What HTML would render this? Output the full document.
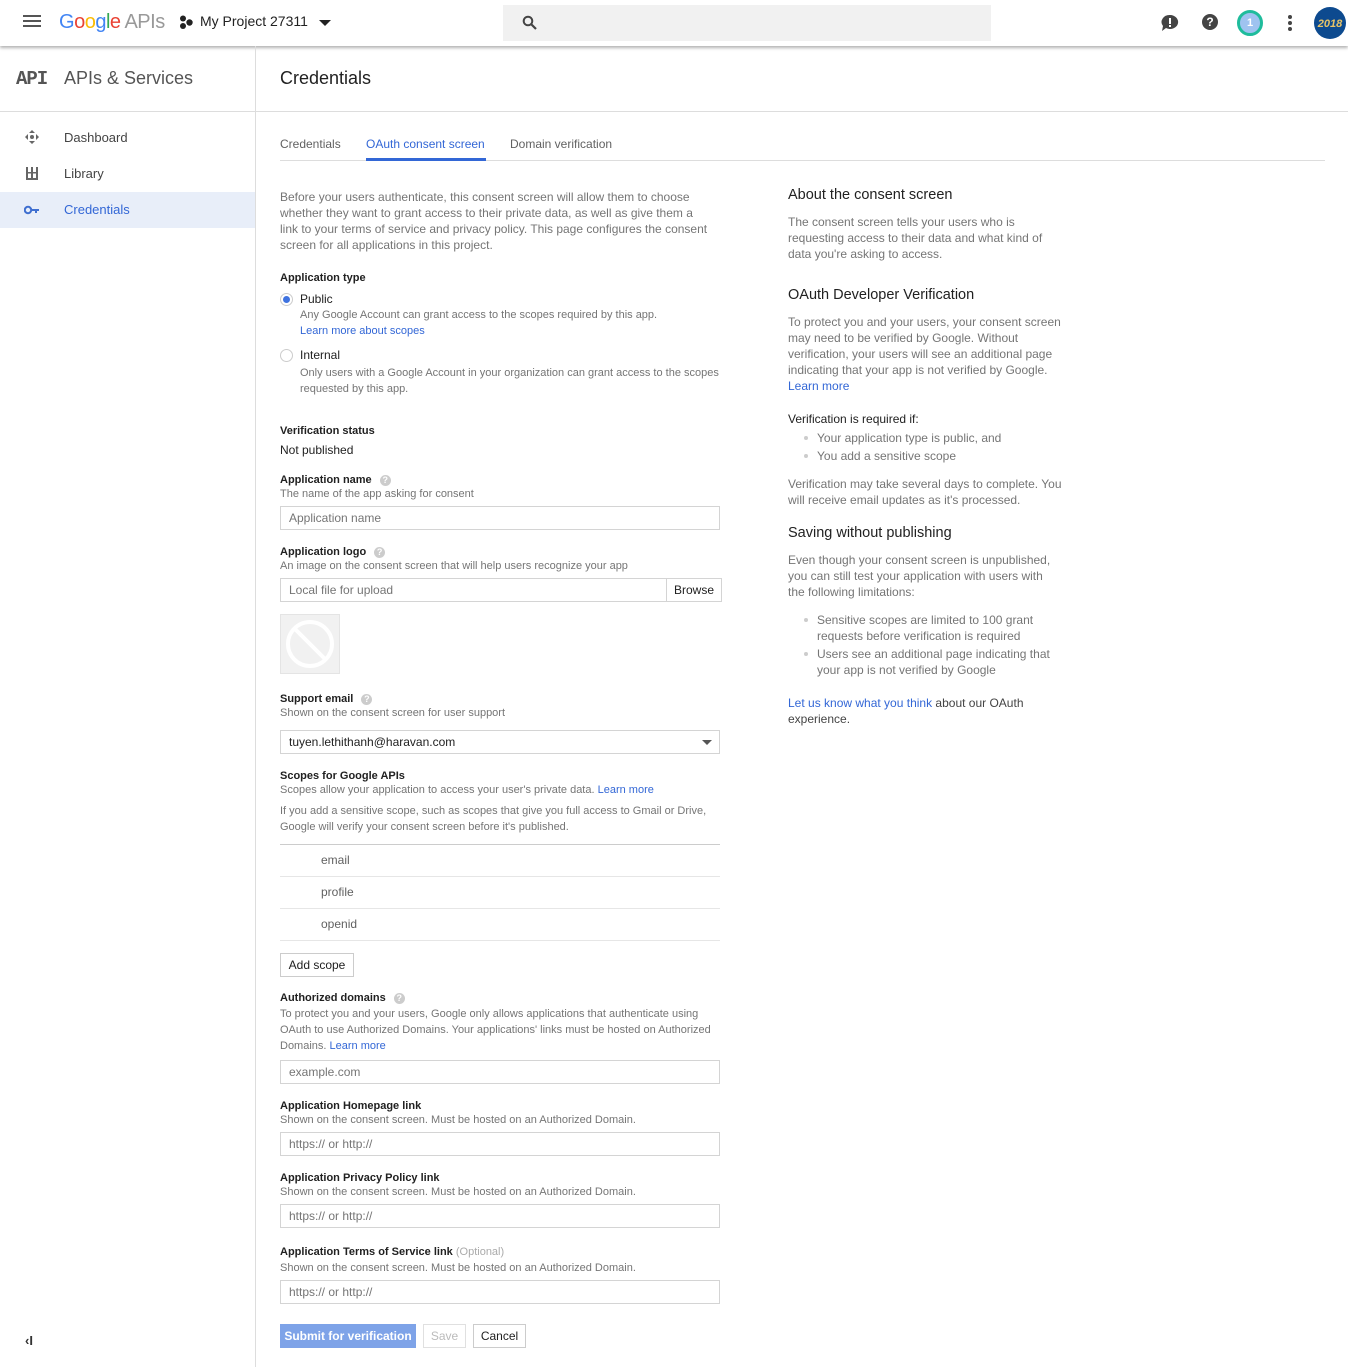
<!DOCTYPE html>
<html><head><meta charset="utf-8"><style>
*{box-sizing:border-box;margin:0;padding:0}
body{width:1348px;height:1367px;position:relative;overflow:hidden;background:#fff;font-family:"Liberation Sans",Arial,sans-serif;color:#212121;font-size:12px}
.a{position:absolute;white-space:nowrap}
.g{color:#757575}
.b{color:#3367d6}
.lbl{font-size:11px;font-weight:bold;color:#212121}
.sub{font-size:11px;color:#757575}
.inp{position:absolute;left:280px;width:440px;height:24px;border:1px solid #d4d4d4;font-size:12px;color:#757575;padding:4px 8px;line-height:14px}
.q{display:inline-block;width:11px;height:11px;border-radius:50%;background:#ccc;color:#fff;font-size:9px;text-align:center;line-height:11px;font-weight:bold;vertical-align:middle;margin-left:8px}
.p{font-size:12px;line-height:16px;color:#757575}
.h{font-size:14.5px;color:#212121}
.li{position:absolute;left:817px;font-size:12px;line-height:16px;color:#757575;white-space:nowrap}
.li:before{content:"";position:absolute;left:-13px;top:6px;width:4px;height:4px;border-radius:50%;background:#ccc}
</style></head><body>
<div class="a" style="left:0;top:0;width:1348px;height:46px;background:#fff;box-shadow:0 2px 3px rgba(0,0,0,.3)"></div>
<div class="a" style="left:23px;top:15px;width:18px;height:2px;background:#555;box-shadow:0 5px 0 #555,0 10px 0 #555"></div>
<div class="a" style="left:59px;top:11px;font-size:20px;letter-spacing:-0.5px"><span style="color:#4285f4">G</span><span style="color:#ea4335">o</span><span style="color:#fbbc05">o</span><span style="color:#4285f4">g</span><span style="color:#34a853">l</span><span style="color:#ea4335">e</span> <span style="color:#999">APIs</span></div>
<svg class="a" style="left:179px;top:15px" width="14" height="14"><circle cx="4" cy="3.5" r="3" fill="#222"/><circle cx="4" cy="11" r="3" fill="#222"/><circle cx="10.5" cy="7.5" r="3.2" fill="#222"/></svg>
<div class="a" style="left:200px;top:13px;font-size:14px;color:#222">My Project 27311</div>
<div class="a" style="left:319px;top:20px;border-left:6px solid transparent;border-right:6px solid transparent;border-top:6px solid #222"></div>
<div class="a" style="left:503px;top:5px;width:488px;height:36px;background:#f1f1f1"></div>
<svg class="a" style="left:522px;top:15px" width="16" height="16"><circle cx="6" cy="6" r="4.3" stroke="#444" stroke-width="2" fill="none"/><path d="M9 9l5 5" stroke="#444" stroke-width="2.2"/></svg>
<svg class="a" style="left:1161px;top:14px" width="18" height="18"><path d="M9 1a8 7 0 1 1 -4 13l-4 3 1-5A8 7 0 0 1 9 1z" fill="#444"/><rect x="8" y="4" width="2" height="6" fill="#fff"/><rect x="8" y="11" width="2" height="2" fill="#fff"/></svg>
<div class="a" style="left:1202px;top:14px;width:16px;height:16px;border-radius:50%;background:#444;color:#fff;font-size:12px;font-weight:bold;text-align:center;line-height:16px">?</div>
<div class="a" style="left:1237px;top:10px;width:26px;height:26px;border-radius:50%;border:3px solid #1fbc9c;background:#9fc3f0;color:#fff;font-size:11px;text-align:center;line-height:20px;font-weight:bold">1</div>
<div class="a" style="left:1288px;top:15px;width:4px;height:4px;border-radius:50%;background:#444;box-shadow:0 6px 0 #444,0 12px 0 #444"></div>
<div class="a" style="left:1314px;top:7px;width:32px;height:32px;border-radius:50%;background:#0d4a8f;color:#e8c468;font-size:11px;font-style:italic;font-weight:bold;text-align:center;line-height:34px">2018</div>
<div class="a" style="left:255px;top:46px;width:1px;height:1321px;background:#ddd"></div>
<div class="a" style="left:0;top:111px;width:1348px;height:1px;background:#ddd"></div>
<div class="a" style="left:16px;top:68px;font-family:'Liberation Mono',monospace;font-weight:bold;font-size:19px;color:#555;letter-spacing:-1px">API</div>
<div class="a" style="left:64px;top:68px;font-size:18px;color:#555">APIs &amp; Services</div>
<div class="a" style="left:280px;top:68px;font-size:18px;color:#212121">Credentials</div>
<svg class="a" style="left:24px;top:129px" width="16" height="16" fill="#666"><path d="M8 1l3 3H5zM8 15l3-3H5zM1 8l3-3v6zM15 8l-3-3v6z"/><circle cx="8" cy="8" r="2"/></svg>
<div class="a" style="left:64px;top:130px;font-size:13px;color:#444">Dashboard</div>
<svg class="a" style="left:26px;top:167px" width="12" height="13" fill="#666"><rect x="0" y="0" width="2" height="13"/><rect x="5" y="0" width="2" height="13"/><rect x="10" y="0" width="2" height="13"/><rect x="0" y="5" width="12" height="1.5"/><rect x="0" y="11" width="12" height="2"/></svg>
<div class="a" style="left:64px;top:166px;font-size:13px;color:#444">Library</div>
<div class="a" style="left:0;top:192px;width:255px;height:36px;background:#e8eef9"></div>
<svg class="a" style="left:24px;top:204px" width="16" height="12" fill="#3f6fd0"><circle cx="4" cy="6" r="3.2" fill="none" stroke="#3f6fd0" stroke-width="2"/><rect x="7" y="5" width="8" height="2"/><rect x="11" y="5" width="2" height="4"/></svg>
<div class="a" style="left:64px;top:202px;font-size:13px;color:#3367d6">Credentials</div>
<div class="a" style="left:25px;top:1333px;font-size:13px;font-weight:bold;color:#333">&lsaquo;I</div>
<div class="a" style="left:280px;top:160px;width:1045px;height:1px;background:#ddd"></div>
<div class="a" style="left:280px;top:137px;font-size:12px;color:#616161">Credentials</div>
<div class="a" style="left:366px;top:137px;font-size:12px;color:#3367d6">OAuth consent screen</div>
<div class="a" style="left:366px;top:158px;width:120px;height:3px;background:#3367d6"></div>
<div class="a" style="left:510px;top:137px;font-size:12px;color:#616161">Domain verification</div>
<div class="a p" style="left:280px;top:189px">Before your users authenticate, this consent screen will allow them to choose<br>whether they want to grant access to their private data, as well as give them a<br>link to your terms of service and privacy policy. This page configures the consent<br>screen for all applications in this project.</div>
<div class="a lbl" style="left:280px;top:272px">Application type</div>
<div class="a" style="left:280px;top:293px;width:13px;height:13px;border-radius:50%;border:1px solid #ccc;background:#fff"><div style="margin:2px;width:7px;height:7px;border-radius:50%;background:#3f73e0"></div></div>
<div class="a" style="left:300px;top:292px;font-size:12px">Public</div>
<div class="a sub" style="left:300px;top:309px">Any Google Account can grant access to the scopes required by this app.</div>
<div class="a b" style="left:300px;top:325px;font-size:11px">Learn more about scopes</div>
<div class="a" style="left:280px;top:349px;width:13px;height:13px;border-radius:50%;border:1px solid #ccc"></div>
<div class="a" style="left:300px;top:348px;font-size:12px">Internal</div>
<div class="a sub" style="left:300px;top:365px;line-height:16px">Only users with a Google Account in your organization can grant access to the scopes<br>requested by this app.</div>
<div class="a lbl" style="left:280px;top:425px">Verification status</div>
<div class="a" style="left:280px;top:443px;font-size:12px">Not published</div>
<div class="a lbl" style="left:280px;top:474px">Application name<span class="q">?</span></div>
<div class="a sub" style="left:280px;top:488px">The name of the app asking for consent</div>
<div class="inp" style="top:506px">Application name</div>
<div class="a lbl" style="left:280px;top:546px">Application logo<span class="q">?</span></div>
<div class="a sub" style="left:280px;top:560px">An image on the consent screen that will help users recognize your app</div>
<div class="inp" style="top:578px;width:442px">Local file for upload</div>
<div class="a" style="left:666px;top:578px;width:56px;height:24px;border:1px solid #d4d4d4;font-size:12px;color:#212121;text-align:center;line-height:22px">Browse</div>
<div class="a" style="left:280px;top:614px;width:60px;height:60px;background:#f1f1f1;border:1px solid #e4e4e4"><svg width="58" height="58"><circle cx="29" cy="29" r="22" stroke="#fff" stroke-width="4" fill="none"/><path d="M14 14L44 44" stroke="#fff" stroke-width="4"/></svg></div>
<div class="a lbl" style="left:280px;top:693px">Support email<span class="q">?</span></div>
<div class="a sub" style="left:280px;top:707px">Shown on the consent screen for user support</div>
<div class="inp" style="top:730px;color:#212121">tuyen.lethithanh@haravan.com</div>
<div class="a" style="left:702px;top:740px;border-left:5px solid transparent;border-right:5px solid transparent;border-top:5px solid #555"></div>
<div class="a lbl" style="left:280px;top:770px">Scopes for Google APIs</div>
<div class="a sub" style="left:280px;top:784px">Scopes allow your application to access your user's private data. <span class="b">Learn more</span></div>
<div class="a sub" style="left:280px;top:803px;line-height:16px">If you add a sensitive scope, such as scopes that give you full access to Gmail or Drive,<br>Google will verify your consent screen before it's published.</div>
<div class="a" style="left:280px;top:844px;width:440px;height:1px;background:#ccc"></div>
<div class="a" style="left:321px;top:853px;font-size:12px;color:#616161">email</div>
<div class="a" style="left:280px;top:876px;width:440px;height:1px;background:#e6e6e6"></div>
<div class="a" style="left:321px;top:885px;font-size:12px;color:#616161">profile</div>
<div class="a" style="left:280px;top:908px;width:440px;height:1px;background:#e6e6e6"></div>
<div class="a" style="left:321px;top:917px;font-size:12px;color:#616161">openid</div>
<div class="a" style="left:280px;top:940px;width:440px;height:1px;background:#e6e6e6"></div>
<div class="a" style="left:280px;top:953px;width:74px;height:24px;border:1px solid #ccc;font-size:12px;text-align:center;line-height:22px">Add scope</div>
<div class="a lbl" style="left:280px;top:992px">Authorized domains<span class="q">?</span></div>
<div class="a sub" style="left:280px;top:1006px;line-height:16px">To protect you and your users, Google only allows applications that authenticate using<br>OAuth to use Authorized Domains. Your applications' links must be hosted on Authorized<br>Domains. <span class="b">Learn more</span></div>
<div class="inp" style="top:1060px">example.com</div>
<div class="a lbl" style="left:280px;top:1100px">Application Homepage link</div>
<div class="a sub" style="left:280px;top:1114px">Shown on the consent screen. Must be hosted on an Authorized Domain.</div>
<div class="inp" style="top:1132px">https:// or http://</div>
<div class="a lbl" style="left:280px;top:1172px">Application Privacy Policy link</div>
<div class="a sub" style="left:280px;top:1186px">Shown on the consent screen. Must be hosted on an Authorized Domain.</div>
<div class="inp" style="top:1204px">https:// or http://</div>
<div class="a lbl" style="left:280px;top:1246px">Application Terms of Service link <span style="font-weight:normal;color:#aaa">(Optional)</span></div>
<div class="a sub" style="left:280px;top:1262px">Shown on the consent screen. Must be hosted on an Authorized Domain.</div>
<div class="inp" style="top:1280px">https:// or http://</div>
<div class="a" style="left:280px;top:1324px;width:136px;height:24px;background:#7ea3e8;color:#fff;font-size:12px;font-weight:bold;text-align:center;line-height:24px">Submit for verification</div>
<div class="a" style="left:423px;top:1324px;width:43px;height:24px;border:1px solid #e0e0e0;color:#bbb;font-size:12px;text-align:center;line-height:22px">Save</div>
<div class="a" style="left:473px;top:1324px;width:53px;height:24px;border:1px solid #ccc;color:#212121;font-size:12px;text-align:center;line-height:22px">Cancel</div>
<div class="a h" style="left:788px;top:187px">About the consent screen</div>
<div class="a p" style="left:788px;top:214px">The consent screen tells your users who is<br>requesting access to their data and what kind of<br>data you're asking to access.</div>
<div class="a h" style="left:788px;top:287px">OAuth Developer Verification</div>
<div class="a p" style="left:788px;top:314px">To protect you and your users, your consent screen<br>may need to be verified by Google. Without<br>verification, your users will see an additional page<br>indicating that your app is not verified by Google.<br><span class="b">Learn more</span></div>
<div class="a" style="left:788px;top:412px;font-size:12px;color:#212121">Verification is required if:</div>
<div class="li" style="top:430px">Your application type is public, and</div>
<div class="li" style="top:448px">You add a sensitive scope</div>
<div class="a p" style="left:788px;top:476px">Verification may take several days to complete. You<br>will receive email updates as it's processed.</div>
<div class="a h" style="left:788px;top:525px">Saving without publishing</div>
<div class="a p" style="left:788px;top:552px">Even though your consent screen is unpublished,<br>you can still test your application with users with<br>the following limitations:</div>
<div class="li" style="top:612px">Sensitive scopes are limited to 100 grant<br>requests before verification is required</div>
<div class="li" style="top:646px">Users see an additional page indicating that<br>your app is not verified by Google</div>
<div class="a p" style="left:788px;top:695px;color:#444"><span class="b">Let us know what you think</span> about our OAuth<br>experience.</div>
</body></html>
